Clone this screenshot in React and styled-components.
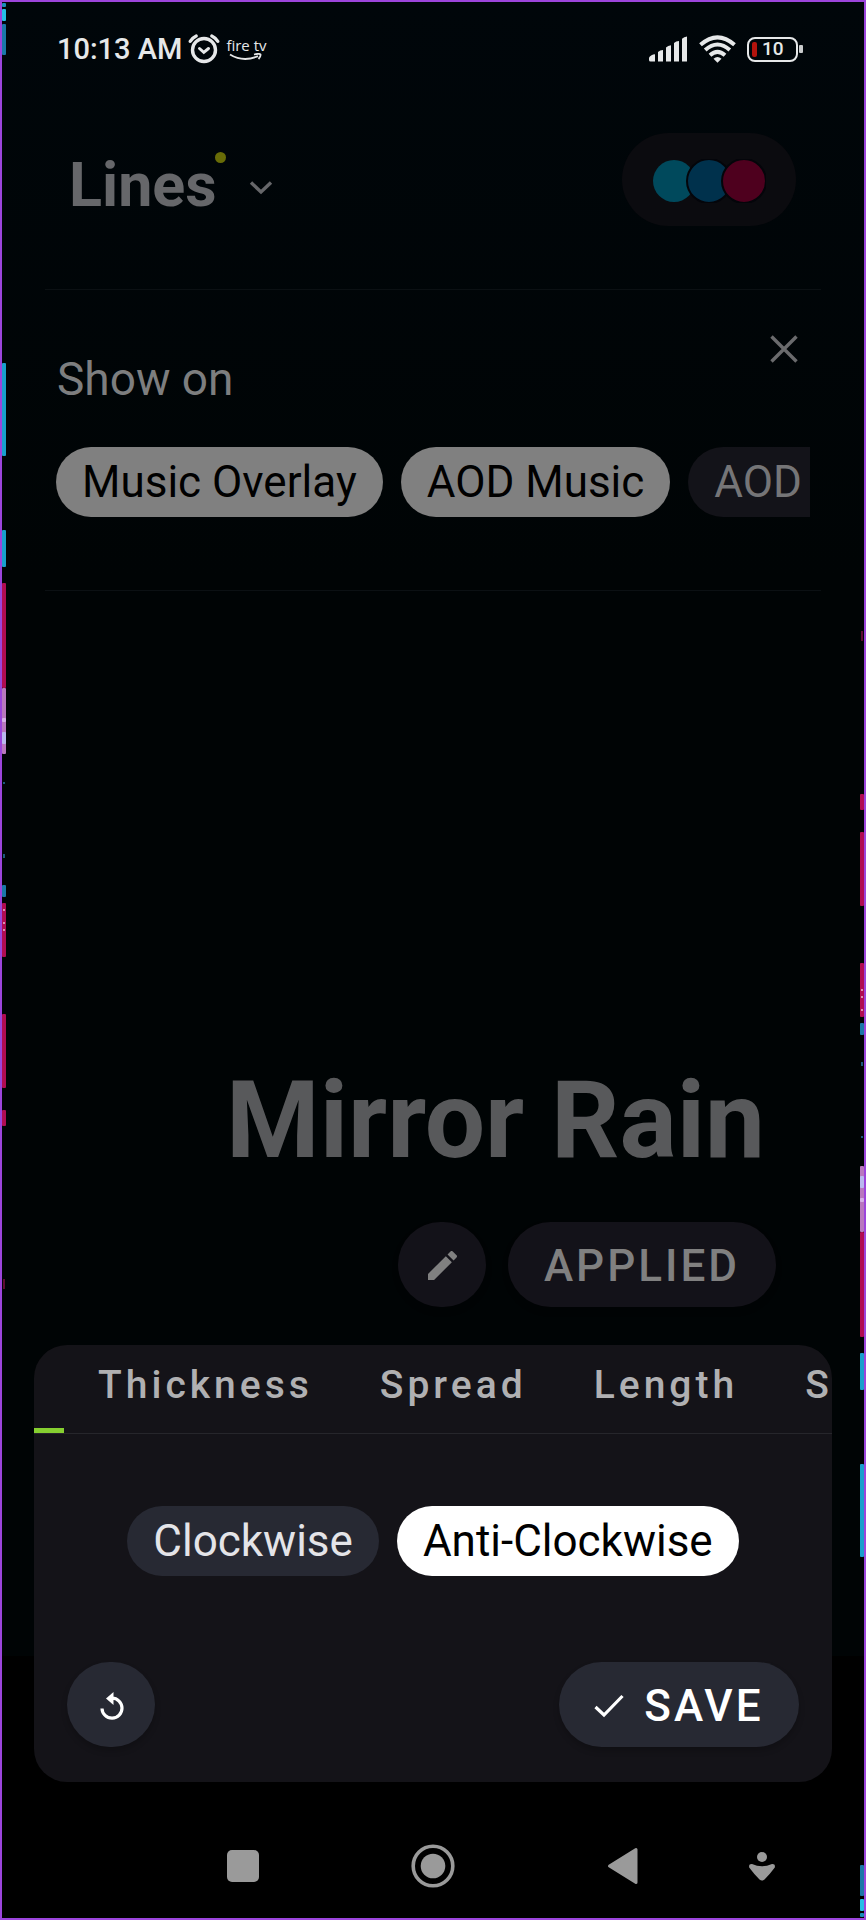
import React, { useState } from 'react';
import styled, { createGlobalStyle } from 'styled-components';

const GlobalStyle = createGlobalStyle`
*{
    box-sizing: border-box;
}
body{
    margin: 0;
    background: #000;
    font-family: Roboto, "Liberation Sans", sans-serif;
}
button{
    font-family: inherit;
    border: none;
    padding: 0;
    margin: 0;
    background: none;
    color: inherit;
    cursor: pointer;
}
svg{
    display: block;
}
`

const Page = styled.div`
position: relative;
display: flex;
flex-direction: column;
min-height: 100vh;
overflow: hidden;
border: 2px solid #9c45dc;
background: linear-gradient(to top, #000 262px, #000405 262px, #000405 70%, #00060a 100%);
`

/* glowing lines that run along both sides of the screen */
const Edge = styled.svg`
position: absolute;
top: -2px;
left: ${({ $right }) => ($right ? 'auto' : '0')};
right: ${({ $right }) => ($right ? '0' : 'auto')};
width: 4px;
height: calc(100% + 4px);
transform: ${({ $right }) => ($right ? 'rotate(180deg)' : 'none')};
pointer-events: none;
`

const StatusBar = styled.div`
display: flex;
align-items: center;
justify-content: space-between;
height: 94px;
padding: 0 61px 0 55px;
color: #e6e8e9;
`
const StatusGroup = styled.div`
display: flex;
align-items: center;
gap: ${({ $gap }) => $gap}px;
`
const Time = styled.span`
font-size: 29px;
line-height: 36px;
font-weight: 500;
`
const FireTv = styled.span`
display: flex;
flex-direction: column;
align-items: center;
font-family: "Open Sans", sans-serif;
font-size: 15px;
line-height: 16px;
`
const Battery = styled.div`
display: flex;
align-items: center;
gap: 1px;
`
const BatteryBody = styled.div`
display: flex;
align-items: center;
gap: 5px;
width: 51px;
height: 25px;
padding-left: 3px;
border: 2px solid #e6e8e9;
border-radius: 8px;
font-size: 19px;
line-height: 20px;
font-weight: 500;
`
const BatteryLevel = styled.span`
width: 5px;
height: 15px;
border-radius: 2px;
background: #b3130c;
`
const BatteryTip = styled.span`
width: 4px;
height: 8px;
border-radius: 1px;
background: #c9cbcc;
`

const Header = styled.header`
display: flex;
align-items: center;
justify-content: space-between;
margin: 0 43px;
padding: 37px 25px 63px 24px;
border-bottom: 1px solid #0b1013;
`
const Category = styled.button`
position: relative;
display: flex;
align-items: center;
gap: 32px;
padding-top: 10px;
color: #66676a;
`
const CategoryName = styled.h1`
margin: 0;
font-size: 61px;
line-height: 72px;
font-weight: 700;
`
const Dot = styled.span`
position: absolute;
top: 13px;
left: 146px;
width: 11px;
height: 11px;
border-radius: 50%;
background: #686c07;
`
const Palette = styled.button`
display: flex;
align-items: center;
justify-content: center;
width: 174px;
height: 93px;
padding-top: 2px;
border-radius: 47px;
background: #0b0b0f;
`

const ShowOn = styled.section`
margin: 0 43px;
padding: 45px 11px 73px;
border-bottom: 1px solid #0b1013;
`
const ShowOnHead = styled.div`
display: flex;
align-items: flex-start;
justify-content: space-between;
padding: 0 12px 0 1px;
`
const ShowOnTitle = styled.h2`
margin: 16px 0 40px;
font-size: 46px;
line-height: 56px;
font-weight: 400;
color: #7d7e7f;
`
const Close = styled.button`
color: #6a6b6d;
`
const ChipRow = styled.div`
display: flex;
justify-content: ${({ $center }) => ($center ? 'center' : 'flex-start')};
gap: 18px;
overflow: hidden;
`
const tones = {
  dimOn: 'background: #808080; color: #000;',
  dimOff: 'background: #131319; color: #757577;',
  on: 'background: #fff; color: #000;',
  off: 'background: #272933; color: #e4e4e8;',
}
const Chip = styled.button`
flex: none;
height: 70px;
min-width: 180px;
padding: 0 26px;
border-radius: 35px;
font-size: 44px;
line-height: 50px;
font-weight: 400;
text-align: left;
white-space: nowrap;
${({ $tone }) => tones[$tone]}
`

const Hero = styled.section`
display: flex;
flex: 1;
flex-direction: column;
align-items: flex-end;
justify-content: flex-end;
padding: 0 88px 38px;
`
const StyleName = styled.h2`
margin: 0 11px 37px 0;
font-size: 107px;
line-height: 128px;
font-weight: 700;
white-space: nowrap;
color: #58595b;
`
const Actions = styled.div`
display: flex;
gap: 22px;
`
const Button = styled.button`
display: flex;
align-items: center;
justify-content: center;
gap: 20px;
width: ${({ $width }) => $width}px;
height: 85px;
padding-top: 2px;
border-radius: 44px;
font-size: 44px;
line-height: 50px;
font-weight: 500;
letter-spacing: 3px;
background: ${({ $dim }) => ($dim ? '#131219' : '#272933')};
color: ${({ $dim }) => ($dim ? '#808080' : '#fff')};
box-shadow: 0 4px 6px rgba(0, 0, 0, 0.2);
`

const Sheet = styled.section`
position: relative;
margin: 0 32px;
overflow: hidden;
border-radius: 33px;
background: #141318;
`
const Tabs = styled.div`
display: flex;
height: 89px;
overflow: hidden;
border-bottom: 1px solid #26262b;
`
const Tab = styled.button`
flex: none;
min-width: 30px;
padding: ${({ $active }) => ($active ? '0' : '0 33px 3px 34px')};
border-bottom: 5px solid ${({ $active }) => ($active ? '#86cf30' : 'transparent')};
font-size: 39px;
line-height: 80px;
font-weight: 500;
letter-spacing: 4px;
color: #b0b0b2;
`
const Options = styled.div`
padding: 72px 24px 86px;
`
const SheetFooter = styled.div`
display: flex;
justify-content: space-between;
padding: 0 33px 35px;
`

const NavBar = styled.nav`
display: grid;
grid-template-columns: 1fr repeat(3, 22%) 1fr;
justify-items: center;
padding: 62px 0 30px;
color: #9a9a9a;
`
const NavButton = styled.button`
grid-column: ${({ $column }) => $column};
justify-self: ${({ $column }) => ($column === 5 ? 'start' : 'center')};
margin-left: ${({ $column }) => ($column === 5 ? '23px' : '0')};
`

const BLUE = '#18a0cc';
const RED = '#b00c52';
const segments = [
  [3, 4, '#168fb8'],
  [9, 12, '#25bfe6'],
  [24, 31, '#1a78a8'],
  [363, 93, BLUE],
  [530, 37, BLUE],
  [583, 105, RED],
  [688, 66, '#b878be'],
  [718, 4, '#d5b0e6'],
  [732, 12, '#b9b8ee'],
  [885, 12, '#1a78a8'],
  [903, 54, RED],
  [1014, 74, RED],
  [1110, 16, RED],
];
const specks = [
  [782, 2, '#1a5a7a'],
  [854, 4, '#1a5a7a'],
  [909, 2, '#d890b0'],
  [922, 2, '#d890b0'],
  [929, 2, '#d890b0'],
  [1279, 10, '#5c0c30'],
];

function EdgeLines({ right }) {
  return (
    <Edge $right={right} viewBox="0 0 4 1920" preserveAspectRatio="none" aria-hidden="true">
      {segments.map(([y, h, fill]) => <rect key={y} x="0" y={y} width="4" height={h} rx="1" fill={fill} />)}
      {specks.map(([y, h, fill]) => <rect key={y} x="1" y={y} width="2" height={h} fill={fill} />)}
    </Edge>
  );
}

function AlarmIcon() {
  return (
    <svg width="32" height="30" viewBox="0 0 32 30" fill="none" stroke="currentColor" strokeLinecap="round">
      <circle cx="16" cy="16" r="11.5" strokeWidth="3.4" />
      <path d="M2.2 7.4Q4.6 3.6 8.2 2M29.8 7.4Q27.4 3.6 23.8 2" strokeWidth="3.2" />
      <path d="M11.5 14.5L15.8 18.3L20.5 14.5" strokeWidth="3" />
    </svg>
  );
}

function SignalIcon() {
  return (
    <svg width="39" height="26" viewBox="0 0 39 26" fill="currentColor">
      <path d="M0 21.5Q2 18.5 6 18.3V25.5H1.5Q0 25.5 0 24Z" />
      <path d="M9 16Q11 14.2 14 14V25.5H9Z" />
      <path d="M17 11.5Q19 9.5 22 9.3V25.5H17Z" />
      <path d="M25 7Q27 5.2 30 5V25.5H25Z" />
      <path d="M33 2.8Q35 .8 38 .5V25.5H33Z" />
    </svg>
  );
}

function WifiIcon() {
  return (
    <svg width="37" height="28" viewBox="0 0 37 28" fill="none" stroke="currentColor" strokeWidth="4">
      <path d="M1.5 9.8Q18.5 -5.2 35.5 9.8" />
      <path d="M6.2 15Q18.5 4 30.8 15" />
      <path d="M11 20.2Q18.5 13.4 26 20.2" />
      <path d="M14.5 23.8Q18.5 20 22.5 23.8L18.5 27.8Z" fill="currentColor" stroke="none" />
    </svg>
  );
}

function StatusIcons() {
  return (
    <StatusGroup $gap={11}>
      <SignalIcon />
      <WifiIcon />
      <Battery>
        <BatteryBody>
          <BatteryLevel />
          10
        </BatteryBody>
        <BatteryTip />
      </Battery>
    </StatusGroup>
  );
}

function App() {
  const [direction, setDirection] = useState('Anti-Clockwise');

  return (
    <Page>
      <GlobalStyle />
      <StatusBar>
        <StatusGroup $gap={6}>
          <Time>10:13 AM</Time>
          <AlarmIcon />
          <FireTv>
            fire tv
            <svg width="34" height="8" viewBox="0 0 34 8" fill="none" stroke="currentColor" strokeWidth="1.8">
              <path d="M1 1.5Q14 9.5 29 3.2M25 1.5Q30 .2 31.5 1.4Q32 3.5 29.5 6" />
            </svg>
          </FireTv>
        </StatusGroup>
        <StatusIcons />
      </StatusBar>

      <Header>
        <Category>
          <CategoryName>Lines</CategoryName>
          <Dot />
          <svg width="24" height="20" viewBox="0 0 24 20" fill="none" stroke="currentColor" strokeWidth="3.4">
            <path d="M2 7.5L12 17L22 7.5" />
          </svg>
        </Category>
        <Palette aria-label="Colours">
          <svg width="114" height="44" viewBox="0 0 114 44" stroke="#04050a" strokeWidth="2">
            <circle cx="22" cy="22" r="21" fill="#00495c" stroke="none" />
            <circle cx="57" cy="22" r="22" fill="#00314c" />
            <circle cx="92" cy="22" r="22" fill="#4e001e" />
          </svg>
        </Palette>
      </Header>

      <ShowOn>
        <ShowOnHead>
          <ShowOnTitle>Show on</ShowOnTitle>
          <Close aria-label="Close">
            <svg width="28" height="28" viewBox="0 0 28 28" fill="none" stroke="currentColor" strokeWidth="3.4">
              <path d="M1.5 1.5L26.5 26.5M26.5 1.5L1.5 26.5" />
            </svg>
          </Close>
        </ShowOnHead>
        <ChipRow>
          <Chip $tone="dimOn">Music Overlay</Chip>
          <Chip $tone="dimOn">AOD Music</Chip>
          <Chip $tone="dimOff">AOD</Chip>
        </ChipRow>
      </ShowOn>

      <Hero>
        <StyleName>Mirror Rain</StyleName>
        <Actions>
          <Button $dim $width={88} aria-label="Edit">
            <svg width="29" height="29" viewBox="3 3 18 18" fill="currentColor">
              <path d="M3 17.25V21h3.75L17.81 9.94l-3.75-3.75L3 17.25zM20.71 7.04a1 1 0 0 0 0-1.41l-2.34-2.34a1 1 0 0 0-1.41 0l-1.83 1.83 3.75 3.75 1.83-1.83z" />
            </svg>
          </Button>
          <Button $dim $width={268}>APPLIED</Button>
        </Actions>
      </Hero>

      <Sheet>
        <Tabs role="tablist">
          <Tab role="tab" $active aria-selected="true" aria-label="Direction" />
          <Tab role="tab">Thickness</Tab>
          <Tab role="tab">Spread</Tab>
          <Tab role="tab">Length</Tab>
          <Tab role="tab">S</Tab>
        </Tabs>
        <Options>
          <ChipRow $center>
            {['Clockwise', 'Anti-Clockwise'].map((name) => (
              <Chip
                key={name}
                $tone={direction === name ? 'on' : 'off'}
                aria-pressed={direction === name}
                onClick={() => setDirection(name)}
              >
                {name}
              </Chip>
            ))}
          </ChipRow>
        </Options>
        <SheetFooter>
          <Button $width={88} aria-label="Reset">
            <svg width="28" height="30" viewBox="0 0 28 30" fill="none" stroke="currentColor" strokeWidth="3.2">
              <path d="M5 17.5A10 10 0 1 0 15 7.2" />
              <path d="M16.5 1V14L9 7.5Z" fill="currentColor" stroke="none" />
            </svg>
          </Button>
          <Button $width={240}>
            <svg width="30" height="24" viewBox="0 0 30 24" fill="none" stroke="currentColor" strokeWidth="3.2">
              <path d="M1.5 13L10 21L28.5 2" />
            </svg>
            SAVE
          </Button>
        </SheetFooter>
      </Sheet>

      <NavBar>
        <NavButton $column={2} aria-label="Recent apps">
          <svg width="44" height="44" viewBox="0 0 44 44" fill="currentColor">
            <rect x="6" y="6" width="32" height="32" rx="5" />
          </svg>
        </NavButton>
        <NavButton $column={3} aria-label="Home">
          <svg width="44" height="44" viewBox="0 0 44 44" fill="currentColor">
            <circle cx="22" cy="22" r="19.8" fill="none" stroke="currentColor" strokeWidth="3.6" />
            <circle cx="22" cy="22" r="12.3" />
          </svg>
        </NavButton>
        <NavButton $column={4} aria-label="Back">
          <svg width="44" height="44" viewBox="0 0 44 44" fill="currentColor" stroke="currentColor" strokeWidth="3" strokeLinejoin="round">
            <path d="M8.5 22L35 5.5V38.5Z" />
          </svg>
        </NavButton>
        <NavButton $column={5} aria-label="Accessibility">
          <svg width="44" height="44" viewBox="0 0 44 44" fill="currentColor">
            <circle cx="22" cy="13" r="5" />
            <path d="M12 20Q22 24.5 32 20Q35.5 19.8 34.8 23.5Q30 30 24.5 35.5Q22 37.6 19.5 35.5Q14 30 9.2 23.5Q8.5 19.8 12 20Z" />
          </svg>
        </NavButton>
      </NavBar>
      <EdgeLines />
      <EdgeLines right />
    </Page>
  );
}

export default App;
